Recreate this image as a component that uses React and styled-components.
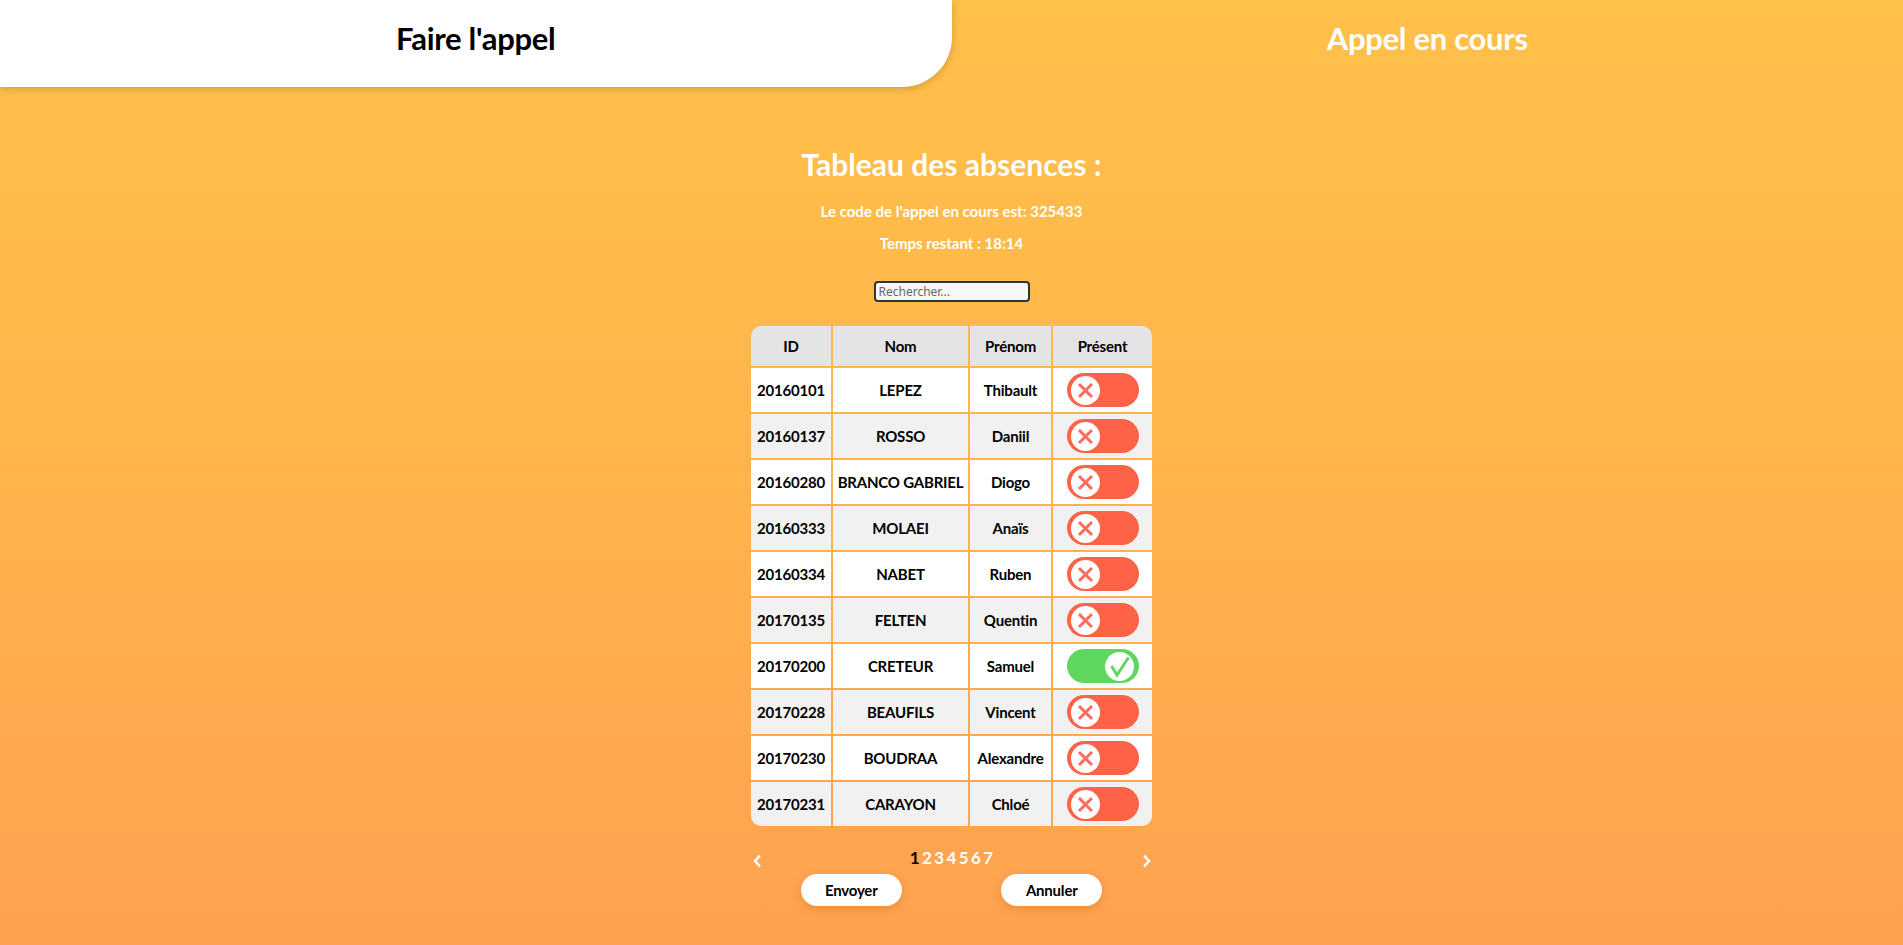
import React from "react";
import styled, { createGlobalStyle } from "styled-components";

const GlobalStyle = createGlobalStyle`
  html, body { margin: 0; padding: 0; }
  body {
    font-family: Lato, "Noto Sans", "Liberation Sans", sans-serif;
    color: #000;
  }
  * { box-sizing: border-box; }
`;

const Page = styled.div`
  min-height: 100vh;
  background: linear-gradient(to bottom, #ffc049 0%, #ffb64b 45%, #ffa150 100%);
  display: flex;
  flex-direction: column;
`;

const TopBar = styled.header`
  display: flex;
  height: 87px;
`;

const Tab = styled.div`
  flex: 1;
  display: flex;
  justify-content: center;
  padding-top: 18px;
  font-size: 31px;
  font-weight: 700;
  letter-spacing: -0.3px;
  line-height: 40px;
  color: ${(p) => (p.$active ? "#000" : "#fff")};
  background: ${(p) => (p.$active ? "#fff" : "transparent")};
  border-bottom-right-radius: ${(p) => (p.$active ? "50px" : "0")};
  box-shadow: ${(p) => (p.$active ? "0 2px 8px rgba(0,0,0,0.18)" : "none")};
`;

const Main = styled.main`
  display: flex;
  flex-direction: column;
  align-items: center;
  padding-top: 59px;
  color: #fff;
`;

const Title = styled.h1`
  margin: 0;
  font-size: 30px;
  line-height: 36px;
  font-weight: 700;
`;

const Info = styled.p`
  margin: ${(p) => p.$mt}px 0 0;
  font-size: 15px;
  line-height: 20px;
  font-weight: 700;
`;

const Search = styled.input`
  margin-top: 28px;
  width: 156px;
  height: 21px;
  border: 2px solid #333;
  border-radius: 4px;
  background: #f7f7f7;
  font-family: "Noto Sans", sans-serif;
  font-size: 12px;
  padding: 0 3px;
  color: #333;
  outline: none;
  &::placeholder { color: #666; }
`;

const Table = styled.div`
  margin-top: 24px;
  display: grid;
  grid-template-columns: 80px 135px 81px 99px;
  grid-auto-rows: 44px;
  grid-template-rows: 40px;
  gap: 2px;
  color: #000;
  & > div:nth-child(1) { border-top-left-radius: 10px; }
  & > div:nth-child(4) { border-top-right-radius: 10px; }
  & > div:nth-last-child(4) { border-bottom-left-radius: 10px; }
  & > div:nth-last-child(1) { border-bottom-right-radius: 10px; }
`;

const Cell = styled.div`
  display: flex;
  align-items: center;
  justify-content: center;
  font-size: 15px;
  font-weight: 700;
  letter-spacing: -0.2px;
  white-space: nowrap;
  background: ${(p) => (p.$head ? "#e4e4e4" : p.$alt ? "#f1f1f1" : "#fff")};
`;

const Toggle = styled.div`
  width: 72px;
  height: 34px;
  border-radius: 17px;
  display: flex;
  align-items: center;
  justify-content: ${(p) => (p.$on ? "flex-end" : "flex-start")};
  padding: 0 ${(p) => (p.$on ? "5px" : "4px")};
  background: ${(p) => (p.$on ? "#5fd75f" : "#ff6347")};
`;

const Knob = styled.div`
  width: 29px;
  height: 29px;
  border-radius: 50%;
  background: #fff;
  display: flex;
  align-items: center;
  justify-content: center;
`;

const Pager = styled.div`
  margin-top: 20px;
  width: 401px;
  height: 25px;
  display: flex;
  justify-content: space-between;
  align-items: flex-start;
`;

const Chevron = styled.button`
  border: none;
  background: none;
  padding: 8px 0 0;
  width: 12px;
  display: flex;
  justify-content: center;
  cursor: pointer;
`;

const Pages = styled.div`
  display: flex;
  font-size: 17px;
  font-weight: 700;
  line-height: 20px;
  padding-top: 2px;
`;

const PageNum = styled.span`
  margin: 0 1.2px;
  color: ${(p) => (p.$current ? "#000" : "#fff")};
  cursor: pointer;
`;

const Actions = styled.div`
  width: 401px;
  display: flex;
  justify-content: space-around;
  margin-top: 3px;
`;

const Button = styled.button`
  width: 101px;
  height: 32px;
  border: none;
  border-radius: 16px;
  background: #fff;
  box-shadow: 0 3px 10px rgba(150, 90, 20, 0.25);
  font-family: Lato, "Noto Sans", sans-serif;
  font-size: 15px;
  font-weight: 700;
  letter-spacing: -0.2px;
  color: #000;
  cursor: pointer;
`;

const students = [
  ["20160101", "LEPEZ", "Thibault", false],
  ["20160137", "ROSSO", "Daniil", false],
  ["20160280", "BRANCO GABRIEL", "Diogo", false],
  ["20160333", "MOLAEI", "Anaïs", false],
  ["20160334", "NABET", "Ruben", false],
  ["20170135", "FELTEN", "Quentin", false],
  ["20170200", "CRETEUR", "Samuel", true],
  ["20170228", "BEAUFILS", "Vincent", false],
  ["20170230", "BOUDRAA", "Alexandre", false],
  ["20170231", "CARAYON", "Chloé", false],
];

const CrossIcon = () => (
  <svg width="29" height="29" viewBox="0 0 29 29">
    <path d="M8 8 L21 21 M21 8 L8 21" stroke="#ff6b5c" strokeWidth="3" strokeLinecap="butt" fill="none" />
  </svg>
);

const CheckIcon = () => (
  <svg width="29" height="29" viewBox="0 0 29 29">
    <path d="M6.5 14 L12 23 L23.5 5.5" stroke="#5fd75f" strokeWidth="3" strokeLinejoin="miter" fill="none" />
  </svg>
);

const ChevronIcon = ({ dir }) => (
  <svg width="9" height="14" viewBox="0 0 9 14">
    <path
      d={dir === "left" ? "M7 1.5 L2 7 L7 12.5" : "M2 1.5 L7 7 L2 12.5"}
      stroke="#fff"
      strokeWidth="2.6"
      fill="none"
    />
  </svg>
);

export default function App() {
  return (
    <Page>
      <GlobalStyle />
      <TopBar>
        <Tab $active>Faire l'appel</Tab>
        <Tab>Appel en cours</Tab>
      </TopBar>
      <Main>
        <Title>Tableau des absences :</Title>
        <Info $mt={19}>Le code de l'appel en cours est: 325433</Info>
        <Info $mt={12}>Temps restant : 18:14</Info>
        <Search placeholder="Rechercher..." />
        <Table>
          <Cell $head>ID</Cell>
          <Cell $head>Nom</Cell>
          <Cell $head>Prénom</Cell>
          <Cell $head>Présent</Cell>
          {students.map(([id, nom, prenom, present], i) => (
            <React.Fragment key={id}>
              <Cell $alt={i % 2 === 1}>{id}</Cell>
              <Cell $alt={i % 2 === 1}>{nom}</Cell>
              <Cell $alt={i % 2 === 1}>{prenom}</Cell>
              <Cell $alt={i % 2 === 1}>
                <Toggle $on={present}>
                  <Knob>{present ? <CheckIcon /> : <CrossIcon />}</Knob>
                </Toggle>
              </Cell>
            </React.Fragment>
          ))}
        </Table>
        <Pager>
          <Chevron aria-label="Précédent">
            <ChevronIcon dir="left" />
          </Chevron>
          <Pages>
            {[1, 2, 3, 4, 5, 6, 7].map((n) => (
              <PageNum key={n} $current={n === 1}>
                {n}
              </PageNum>
            ))}
          </Pages>
          <Chevron aria-label="Suivant">
            <ChevronIcon dir="right" />
          </Chevron>
        </Pager>
        <Actions>
          <Button>Envoyer</Button>
          <Button>Annuler</Button>
        </Actions>
      </Main>
    </Page>
  );
}
